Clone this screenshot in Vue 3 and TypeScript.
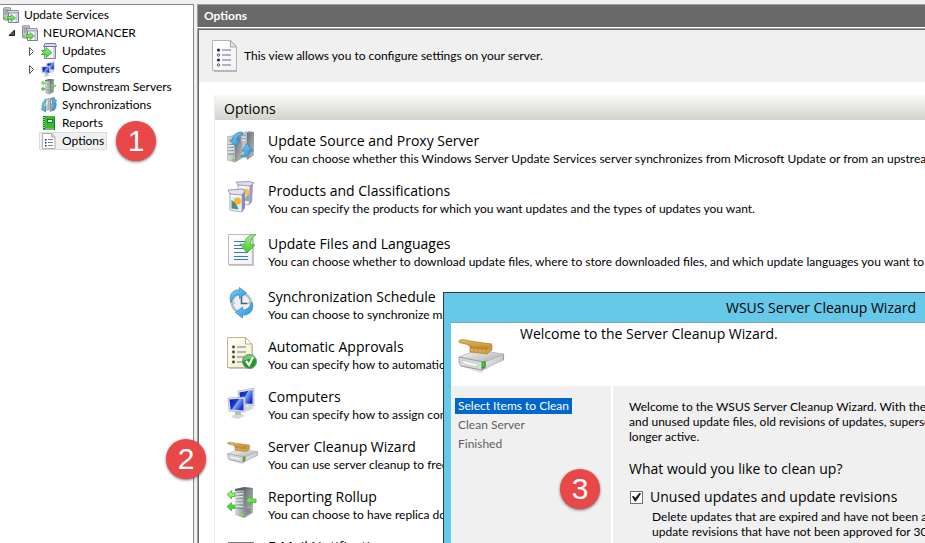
<script setup lang="ts">
import { ref } from 'vue'

interface TreeNode {
  label: string
  icon: string
  level: number
  arrow?: 'open' | 'closed'
}

interface OptionItem {
  title: string
  text: string
  icon: string
  roomy?: boolean
}

const nodes: TreeNode[] = [
  { label: 'Update Services', icon: 'host', level: 0 },
  { label: 'NEUROMANCER', icon: 'host', level: 1, arrow: 'open' },
  { label: 'Updates', icon: 'updates', level: 2, arrow: 'closed' },
  { label: 'Computers', icon: 'computers', level: 2, arrow: 'closed' },
  { label: 'Downstream Servers', icon: 'rollup', level: 2 },
  { label: 'Synchronizations', icon: 'sync', level: 2 },
  { label: 'Reports', icon: 'reports', level: 2 },
  { label: 'Options', icon: 'sheet-small', level: 2 },
]

const options: OptionItem[] = [
  {
    title: 'Update Source and Proxy Server',
    text: 'You can choose whether this Windows Server Update Services server synchronizes from Microsoft Update or from an upstream server.',
    icon: 'source',
  },
  {
    title: 'Products and Classifications',
    text: 'You can specify the products for which you want updates and the types of updates you want.',
    icon: 'products',
    roomy: true,
  },
  {
    title: 'Update Files and Languages',
    text: 'You can choose whether to download update files, where to store downloaded files, and which update languages you want to use.',
    icon: 'files',
    roomy: true,
  },
  { title: 'Synchronization Schedule', text: 'You can choose to synchronize manually.', icon: 'schedule' },
  { title: 'Automatic Approvals', text: 'You can specify how to automatically approve.', icon: 'approvals' },
  { title: 'Computers', text: 'You can specify how to assign computers.', icon: 'computers' },
  { title: 'Server Cleanup Wizard', text: 'You can use server cleanup to free up space.', icon: 'cleanup' },
  { title: 'Reporting Rollup', text: 'You can choose to have replica downstream.', icon: 'rollup' },
  { title: 'E-Mail Notifications', text: 'You can choose to send e-mail.', icon: 'mail' },
]

const steps: string[] = ['Select Items to Clean', 'Clean Server', 'Finished']

const selected = ref('Options')
const step = ref(steps[0])
const unused = ref(true)
</script>

<template>
  <div class="console">
    <svg class="defs" aria-hidden="true">
      <defs>
        <linearGradient id="steel" x1="0" x2="1" y1="0" y2="0">
          <stop offset="0" stop-color="#d8dcdd" /><stop offset="1" stop-color="#8f989a" />
        </linearGradient>
        <linearGradient id="steel-dark" x1="0" x2="1" y1="0" y2="1">
          <stop offset="0" stop-color="#646d6f" /><stop offset="1" stop-color="#bcc2c3" />
        </linearGradient>
        <linearGradient id="blue" x1="0" x2="1" y1="0" y2="1">
          <stop offset="0" stop-color="#86d3f8" /><stop offset="1" stop-color="#1e8cd6" />
        </linearGradient>
        <linearGradient id="screen" x1="0" x2="1" y1="0" y2="0.6">
          <stop offset="0" stop-color="#0a12a8" /><stop offset="0.5" stop-color="#1f3fdc" /><stop offset="0.55" stop-color="#86abf5" /><stop offset="1" stop-color="#1a2fc8" />
        </linearGradient>
        <linearGradient id="green" x1="0" x2="0" y1="0" y2="1">
          <stop offset="0" stop-color="#a6f488" /><stop offset="1" stop-color="#43c431" />
        </linearGradient>
        <linearGradient id="paper" x1="0" x2="1" y1="0" y2="1">
          <stop offset="0" stop-color="#ffffff" /><stop offset="1" stop-color="#f1f1f4" />
        </linearGradient>
        <linearGradient id="cream" x1="0" x2="1" y1="0" y2="1">
          <stop offset="0" stop-color="#fffff4" /><stop offset="1" stop-color="#f1ecc9" />
        </linearGradient>
        <linearGradient id="wood" x1="0" x2="0" y1="0" y2="1">
          <stop offset="0" stop-color="#e9bd5a" /><stop offset="1" stop-color="#b98630" />
        </linearGradient>
        <linearGradient id="drive" x1="0" x2="1" y1="0" y2="1">
          <stop offset="0" stop-color="#fafafa" /><stop offset="1" stop-color="#a5a8aa" />
        </linearGradient>
      </defs>

      <symbol id="host" viewBox="0 0 16 16">
        <path d="M.5 1l5-1 2 1v11l-3 1.500-4-1z" fill="#c3c8ca" stroke="#7d8589" stroke-width=".8" />
        <path d="M1.500 3h4M1.500 5h3M1.500 7h3" stroke="#6d7478" stroke-width=".8" />
        <rect x="1" y="10" width="2" height="2" fill="#5fdc3c" />
        <path d="M5.500 5.500h10v10h-10z" fill="#f8f8fd" stroke="#7a78a3" />
        <path d="M4 3.500h11l.5 2.500h-10z" fill="#d8d7ea" stroke="#7a78a3" stroke-width=".8" />
        <path d="M13.500 6v9" stroke="#c6c5df" stroke-width="2" />
        <path d="M4 9.500h4v-2l4.500 3.500L8 14.500v-2H4l1-1.500z" fill="url(#green)" stroke="#38a52c" stroke-width=".7" />
      </symbol>

      <symbol id="updates" viewBox="0 0 16 16">
        <path d="M3.500 3.500h11v12h-11z" fill="#f9f9fe" stroke="#8583aa" />
        <path d="M4 .5h10.500l1 3H2.500z" fill="#dadaeb" stroke="#77759f" />
        <path d="M13 4v11" stroke="#cfcfe4" stroke-width="2" />
        <path d="M.5 7.500h4.500v-3l6 5-6 5v-3H.5l2-2z" fill="url(#green)" stroke="#33a329" stroke-width=".8" />
      </symbol>

      <symbol id="computers" viewBox="0 0 32 32">
        <path d="M16 20l8-1 3 2-6 3-6-1z" fill="#d3d5da" />
        <path d="M11 4l16-3v18l-15-2z" fill="#dfe1e6" stroke="#adb2bc" stroke-width=".7" />
        <path d="M12.500 5.500L25.500 3v14l-12-1z" fill="url(#screen)" />
        <path d="M6 28l9-1 3 2-7 3-7-2z" fill="#d6d8dd" />
        <path d="M8 24h6v4H8z" fill="#b9bdc4" />
        <path d="M1 11l17-1v15L2 24z" fill="#e4e6ea" stroke="#a8adb8" stroke-width=".7" />
        <path d="M2.500 12.500l14-1v12l-13-1z" fill="url(#screen)" />
      </symbol>

      <symbol id="rollup" viewBox="0 0 32 32">
        <path d="M8 2l9-1v30l-9-3z" fill="url(#steel)" />
        <path d="M8 2l9-2 9 1v1l-9 1-9 1z" fill="#59626a" />
        <path d="M17 2l9-1v25l-9 5z" fill="url(#steel-dark)" />
        <path d="M9 6l7-.5M9 9l7-.5M9 12h7M9 15h7M9 18l7 .5M9 21l7 .5" stroke="#7b8386" stroke-width=".9" />
        <path d="M9 7l7-.5M9 10l7-.5M9 13h7M9 16h7M9 19l7 .5" stroke="#f4f6f6" stroke-width=".9" />
        <path d="M19 23l5-1M19 25l5-1M19 27l5-2" stroke="#6d7476" stroke-width=".9" />
        <rect x="14" y="27" width="2.500" height="2.500" fill="#71f31f" />
        <path d="M0 7.500L4.500 3.500V6H8v3.500H4.500v2.500zM0 19.500l4.500-4V18H8v3.500H4.500V24z" fill="url(#green)" stroke="#3fb534" stroke-width=".8" />
        <path d="M19 13.500l4.500-4V12H29v3.500h-5.500V18z" fill="url(#green)" stroke="#3fb534" stroke-width=".8" />
      </symbol>

      <symbol id="sync" viewBox="0 0 16 16">
        <path d="M4 2.500l4-1v11l-4 1z" fill="#c3c9cb" stroke="#7d8588" stroke-width=".6" />
        <path d="M9 1.500l4.500-1v12l-4.500 2z" fill="#9ea6a8" stroke="#6a7275" stroke-width=".6" />
        <path d="M5 5l2-.5M5 7l2-.5M10 4l3-.5M10 6l3-.5" stroke="#f4f7f7" />
        <path d="M4.500 2.500C1 5 .5 9 1.500 11.500l-1.500.5 4.500 3V9.500L3 10.500C2.500 8 3 6 4.500 5zM11.500 14c4-2 4.500-6 3-9.500l1.500-1-4.500-2v5.500l1.500-1c.5 3 0 4.500-1.500 5.500z" fill="url(#blue)" stroke="#2480bf" stroke-width=".5" />
      </symbol>

      <symbol id="reports" viewBox="0 0 16 16">
        <path d="M2 1h11l1 1v13H3l-1-1z" fill="#128015" />
        <path d="M4 1h9v12H4z" fill="#3cb834" />
        <path d="M1 2.500h3M1 4.500h3M1 6.500h3M1 8.500h3M1 10.500h3M1 12.500h3" stroke="#a8dca0" stroke-width=".9" />
        <rect x="6.500" y="4.500" width="5" height="3" fill="#e9fbe2" stroke="#157d16" />
        <path d="M4 14h9" stroke="#dfeedb" />
      </symbol>

      <symbol id="sheet-small" viewBox="0 0 16 16">
        <path d="M1.500.5h9l3.500 3.500v11.500H1.500z" fill="#fff" stroke="#b0b0b0" />
        <path d="M10.500.5V4H14z" fill="#e4e4e4" stroke="#a5a5a5" stroke-width=".8" />
        <path d="M7 6.500h5M7 9.500h5M7 12.500h5" stroke="#7d7aa3" />
        <path d="M4 6h1.500v1.500H4zM4 9h1.500v1.500H4zM4 12h1.500v1.500H4z" fill="#2b2352" />
      </symbol>

      <symbol id="sheet" viewBox="0 0 26 32">
        <path d="M2 2h17l6 6v24H2z" fill="#b9b9b9" />
        <path d="M.5.5h18l6 6.500v23.500H.5z" fill="url(#paper)" stroke="#b4b4b4" />
        <path d="M18.500.5V7h6z" fill="#e8e8e8" stroke="#a5a5a5" />
        <path d="M10 10h9M10 15h9M10 20h9M10 25h9" stroke="#6e6a96" stroke-width="1.200" />
        <g fill="#2b2352"><circle cx="6.500" cy="10" r="1.600" /><circle cx="6.500" cy="20" r="1.600" /></g>
        <g fill="#fff" stroke="#443d6b" stroke-width=".9"><circle cx="6.500" cy="15" r="1.200" /><circle cx="6.500" cy="25" r="1.200" /></g>
      </symbol>

      <symbol id="source" viewBox="0 0 32 32">
        <path d="M12 2l10-2 5 1v23l-6 4-9-3z" fill="url(#steel)" />
        <path d="M20 2l7-1v23l-7 5z" fill="url(#steel-dark)" />
        <path d="M0 6l9-2 6 1v22l-7 4-8-2z" fill="url(#steel)" stroke="#888f91" stroke-width=".5" />
        <path d="M8 6l7-1v22l-7 4z" fill="url(#steel-dark)" />
        <path d="M1 14l6-.5M1 17l6-.5M1 20h6M1 23h6M14 5h5M14 8h5" stroke="#7b8587" stroke-width=".9" />
        <path d="M1 15l6-.5M1 18l6-.5M1 21h6M14 6h5M14 9h5" stroke="#fff" stroke-width=".9" />
        <rect x="5" y="28" width="2.500" height="2" fill="#6ee823" />
        <path d="M15 1C9 1 6 4 5.500 9H2.500l6 6.500L13 9h-3c.5-3 2-5 6-5.500z" fill="url(#blue)" stroke="#2277ae" stroke-width=".6" />
        <path d="M14 26c6 0 8.500-3 8.500-6H26l-6-7.500-5 7.500h3c.5 3-1 4.500-4 5z" fill="url(#blue)" stroke="#2277ae" stroke-width=".6" />
      </symbol>

      <symbol id="products" viewBox="0 0 32 32">
        <path d="M22 4l4-1-1 18-3 3z" fill="#9c9abf" />
        <path d="M11 4l12-1-1 21-11-1z" fill="#f7f7ff" stroke="#a4a2c4" stroke-width=".8" />
        <path d="M9 1l14-.5 4 1.500-4 3-12-1z" fill="#dddcef" stroke="#8f8db3" stroke-width=".8" />
        <path d="M13 7l8-.5v12l-7 .5z" fill="#e1ebf5" />
        <circle cx="19" cy="11" r="3.200" fill="#ffc04a" />
        <path d="M17 20c1-4 2-5 5-7v7z" fill="#86b8a0" />
        <path d="M15 13l3-2v16l-3 4z" fill="#8d8bb5" />
        <path d="M3 12l12-1v20L3 29z" fill="#fafaff" stroke="#9290b6" stroke-width=".8" />
        <path d="M1 9l14-1 3 2-3 4-12-1z" fill="#e3e2f2" stroke="#8583aa" stroke-width=".8" />
        <path d="M4.500 16l9-.5v13l-9-1z" fill="#dbebf5" />
        <circle cx="10.500" cy="20" r="3.500" fill="#ffb12a" />
        <path d="M4.500 19c3 2 6 5 7 9.500l-7-1z" fill="#4d9173" />
      </symbol>

      <symbol id="files" viewBox="0 0 32 32">
        <path d="M2 2h25v30H2z" fill="#c6c6c6" />
        <path d="M1.500.5h24v30h-24z" fill="url(#paper)" stroke="#bbb" />
        <path d="M7 7.500h11M7 11.500h8M7 14.500h9M7 18.500h14M7 22.500h14M7 25.500h14" stroke="#3978bd" />
        <path d="M29 .5c-8 0-11 4-11.500 10L13 10l7 9 8-8-4.500-.5c0-5 2-8 5.500-10z" fill="url(#green)" stroke="#37a332" stroke-width=".7" />
      </symbol>

      <symbol id="schedule" viewBox="0 0 32 32">
        <circle cx="14.500" cy="16" r="9.500" fill="#eaf0f5" stroke="#b0bcc6" stroke-width="2.500" />
        <path d="M14.500 10v6.500h6" fill="none" stroke="#506272" stroke-width="1.500" />
        <path d="M14.500 8v1M14.500 23v1M6.500 16h1M21.500 16h1" stroke="#5d6b7b" />
        <path d="M4 16C1 8 6 2 12.500 3V.5l7 5.500-7 5.500V8C8 7.500 5 10 4 16z" fill="url(#blue)" stroke="#2f86c4" stroke-width=".7" />
        <path d="M25 15c3 8-3 14-9.500 13v3l-7-5.500 7-5.500v3c5 0 8-3 9.500-8z" fill="url(#blue)" stroke="#2f86c4" stroke-width=".7" />
      </symbol>

      <symbol id="approvals" viewBox="0 0 32 32">
        <path d="M2 1.500h17l7 7V32H2z" fill="#c9c6ae" />
        <path d="M.5.5h18l6.500 6.500v23.500H.5z" fill="url(#cream)" stroke="#b9b79f" />
        <path d="M18.500.5V7H25z" fill="#fff" stroke="#b3b19a" />
        <path d="M10 10h9M10 15h9M10 20h8M10 25h6" stroke="#6f7296" />
        <g fill="#3b3b42"><circle cx="6.500" cy="10" r="1.400" /><circle cx="6.500" cy="15" r="1.400" /><circle cx="6.500" cy="20" r="1.400" /><circle cx="6.500" cy="25" r="1.400" /></g>
        <circle cx="22.500" cy="24.500" r="7" fill="#1f9a22" stroke="#868d86" />
        <path d="M16.500 22a6.500 6.500 0 0 1 12 0c-4-1-8 0-12 2z" fill="#72c96b" />
        <path d="M19 24l3 4 4-8" fill="none" stroke="#fff" stroke-width="2.200" />
      </symbol>

      <symbol id="cleanup" viewBox="0 0 48 34">
        <path d="M2 27l21 7 24-16-2-3z" fill="#c8c8c8" opacity=".6" />
        <path d="M1 18l18-7 27 4v6L24 31 3 27z" fill="#9a9d9f" />
        <path d="M1 18l18-7 27 4-21 9z" fill="url(#drive)" stroke="#b1b3b5" stroke-width=".6" />
        <path d="M1 18l24 5-1 8-21-4c-2-2-2-6-2-9z" fill="#dadbdc" stroke="#8b8f92" stroke-width=".8" />
        <path d="M4 21l16 4-1 3-14-3z" fill="#f6f6f6" stroke="#b2b5b8" stroke-width=".6" />
        <path d="M24 23.500l3-1v5l-3 2z" fill="#2ce91c" stroke="#27622a" stroke-width=".7" />
        <path d="M28 23l17-7v5l-17 9z" fill="url(#drive)" />
        <path d="M12 8l18 2 4-4v5l-5 4-17-2z" fill="#cf9a40" stroke="#a3782c" stroke-width=".6" />
        <path d="M14 9.500v3M18 10v3M22 10.500v3M26 11v3" stroke="#e3b75e" />
        <path d="M2 1c5-1 8 1 13 1.500L34 5l-5 5-17-2c-1-3-5-3-9-4-2 0-3-2-1-3z" fill="url(#wood)" stroke="#a87a2a" stroke-width=".7" />
      </symbol>

      <symbol id="mail" viewBox="0 0 32 32">
        <path d="M1 5h26v20H1z" fill="#c9cbce" />
        <path d="M1 5h26v2H1z" fill="#77797d" />
        <path d="M2 8l12 9L26 8" fill="none" stroke="#85898f" />
      </symbol>
    </svg>

    <nav class="tree" aria-label="Console tree">
      <button
        v-for="node in nodes"
        :key="node.label"
        type="button"
        class="node"
        :class="['level-' + node.level, { selected: node.label === selected }]"
        @click="selected = node.label"
      >
        <span class="twisty">
          <svg v-if="node.arrow === 'open'" viewBox="0 0 8 10"><path d="M6.500 2v5.500H1z" fill="#555" stroke="#222" /></svg>
          <svg v-else-if="node.arrow === 'closed'" viewBox="0 0 8 10"><path d="M2.500 1.500L6.500 5.500 2.500 9.500z" fill="#fff" stroke="#555" /></svg>
        </span>
        <span class="node-body">
          <svg class="node-icon"><use :href="'#' + node.icon" /></svg>
          <span>{{ node.label }}</span>
        </span>
      </button>
    </nav>

    <main class="pane">
      <header class="pane-title">Options</header>
      <div class="view">
        <div class="intro">
          <svg class="intro-icon"><use href="#sheet" /></svg>
          <span>This view allows you to configure settings on your server.</span>
        </div>
        <section class="group">
          <h2>Options</h2>
          <ul>
            <li v-for="item in options" :key="item.title" :class="{ roomy: item.roomy }">
              <svg class="option-icon"><use :href="'#' + item.icon" /></svg>
              <div>
                <a href="#">{{ item.title }}</a>
                <p>{{ item.text }}</p>
              </div>
            </li>
          </ul>
        </section>
      </div>
    </main>

    <section class="dialog" role="dialog" aria-labelledby="wizard-title">
      <h1 id="wizard-title">WSUS Server Cleanup Wizard</h1>
      <div class="wizard">
        <header class="welcome">
          <svg class="welcome-icon"><use href="#cleanup" /></svg>
          <span>Welcome to the Server Cleanup Wizard.</span>
        </header>
        <div class="wizard-body">
          <div class="steps">
            <button v-for="name in steps" :key="name" type="button" :class="{ current: name === step }" @click="step = name">{{ name }}</button>
          </div>
          <div class="page">
            <p>
              Welcome to the WSUS Server Cleanup Wizard. With the Help of this wizard<br />
              and unused update files, old revisions of updates, superseded updates<br />
              longer active.
            </p>
            <h3>What would you like to clean up?</h3>
            <label class="choice"><input v-model="unused" type="checkbox" />Unused updates and update revisions</label>
            <p class="hint">
              Delete updates that are expired and have not been approved<br />
              update revisions that have not been approved for 30 days
            </p>
          </div>
        </div>
      </div>
    </section>

    <span class="badge one">1</span>
    <span class="badge two">2</span>
    <span class="badge three">3</span>
  </div>
</template>

<style>
body {
  margin: 0;
  overflow: hidden;
}
</style>

<style scoped>
.console {
  position: relative;
  display: grid;
  grid-template-columns: 194px minmax(0, 1fr);
  column-gap: 3px;
  height: 100vh;
  padding-top: 4px;
  box-sizing: border-box;
  overflow: hidden;
  background: #f0f0f0;
  color: #000;
  font-family: Lato, 'Open Sans', sans-serif;
  font-size: 12px;
  line-height: 16px;
  white-space: nowrap;
}

.defs {
  position: absolute;
  width: 0;
  height: 0;
}

h1,
h2,
h3,
p,
ul {
  margin: 0;
  padding: 0;
  font-weight: 400;
}

h1,
h2,
h3,
.group a,
.welcome,
.choice {
  font-family: 'Open Sans', 'Noto Sans', sans-serif;
  font-size: 14px;
}

button {
  border: 0;
  margin: 0;
  padding: 0;
  background: none;
  color: inherit;
  font: inherit;
  text-align: left;
}

.tree {
  display: flex;
  flex-direction: column;
  padding-top: 1px;
  border-top: 1px solid #828790;
  border-right: 1px solid #828790;
  background: #fff;
}

.node {
  display: flex;
  align-items: center;
  height: 18px;
}

.level-1 {
  padding-left: 8px;
}

.level-2 {
  padding-left: 27px;
}

.twisty {
  width: 12px;
  height: 10px;
}

.level-0 .twisty {
  width: 1px;
}

.twisty svg {
  display: block;
  width: 8px;
  height: 10px;
}

.node-body {
  display: flex;
  align-items: center;
  gap: 5px;
  height: 18px;
  padding: 0 3px 0 2px;
  box-sizing: border-box;
}

.selected .node-body {
  background: #f0f0f0;
  box-shadow: inset 0 0 0 1px #dcdcdc;
}

.node-icon {
  width: 16px;
  height: 16px;
}

.pane {
  display: flex;
  flex-direction: column;
  gap: 1px;
  min-width: 0;
  background: #fff;
}

.pane-title {
  height: 23px;
  padding-left: 6px;
  border: 1px solid #a0a0a0;
  border-width: 1px 0 0 1px;
  box-sizing: border-box;
  background: #696969;
  color: #fff;
  font-weight: 700;
  line-height: 22px;
}

.view {
  flex: 1;
  min-height: 0;
  overflow: hidden;
  border: 1px solid #a0a0a0;
  border-width: 1px 0 0 1px;
  box-shadow: inset 1px 1px 0 #696969;
  padding: 1px 0 0 1px;
}

.intro {
  display: flex;
  align-items: center;
  gap: 6px;
  height: 52px;
  padding-left: 13px;
  background: #f0f0f0;
}

.intro-icon {
  width: 26px;
  height: 32px;
}

.group {
  margin: 13px 0 0 15px;
  border-left: 1px solid #ececec;
}

.group h2 {
  height: 25px;
  padding-left: 9px;
  box-sizing: border-box;
  background: linear-gradient(#f9f9f7, #d3d2cc);
  line-height: 27px;
}

.group ul {
  padding-top: 11px;
  list-style: none;
}

.group li {
  display: flex;
  gap: 9px;
  height: 50px;
  padding-left: 12px;
}

.group .roomy {
  height: 53px;
}

.option-icon {
  flex: none;
  width: 32px;
  height: 32px;
}

.group a {
  display: block;
  color: #000;
  line-height: 20px;
  text-decoration: none;
}

.dialog {
  position: absolute;
  top: 292px;
  left: 443px;
  width: 756px;
  height: 480px;
  padding: 0 7px 7px;
  border: 1px solid #2b3a42;
  box-sizing: border-box;
  background: #66c9ea;
}

.dialog h1 {
  line-height: 29px;
  text-align: center;
}

.wizard {
  border-top: 1px solid #7ea6b4;
  background: #fff;
}

.welcome {
  display: flex;
  gap: 14px;
  height: 63px;
  padding-left: 7px;
  line-height: 22px;
}

.welcome-icon {
  width: 48px;
  height: 34px;
  margin-top: 16px;
}

.wizard-body {
  display: grid;
  grid-template-columns: 160px 1fr;
  gap: 2px;
  height: 380px;
}

.steps {
  display: flex;
  flex-direction: column;
  align-items: flex-start;
  gap: 3px;
  padding: 12px 4px;
  background: #f0f0f0;
  color: #606060;
}

.steps button {
  padding: 0 3px;
}

.steps .current {
  background: #0066cc;
  color: #fff;
}

.page {
  padding: 13px 16px;
  background: #f0f0f0;
  line-height: 15px;
}

.page h3 {
  margin-top: 15px;
  line-height: 20px;
}

.choice {
  display: flex;
  align-items: center;
  gap: 7px;
  margin-top: 7px;
  line-height: 22px;
}

.choice input {
  appearance: none;
  width: 13px;
  height: 13px;
  margin: 0 0 0 1px;
  border: 1px solid #707070;
  background: #fff;
}

.choice input:checked::before {
  content: '';
  display: block;
  width: 9px;
  height: 9px;
  margin: 1px;
  background: #1d1d1d;
  clip-path: polygon(0 45%, 15% 35%, 38% 58%, 85% 0, 100% 14%, 42% 100%, 32% 100%);
}

.hint {
  margin-top: 1px;
  padding-left: 23px;
}

.badge {
  position: absolute;
  width: 40px;
  height: 40px;
  border-radius: 50%;
  background: #e84848;
  box-shadow: 0 1px 3px rgba(0, 0, 0, 0.55);
  color: #fff;
  font: 30px/40px 'Liberation Sans', sans-serif;
  text-align: center;
}

.one {
  top: 121px;
  left: 116px;
}

.two {
  top: 439px;
  left: 166px;
}

.three {
  top: 469px;
  left: 560px;
}
</style>
